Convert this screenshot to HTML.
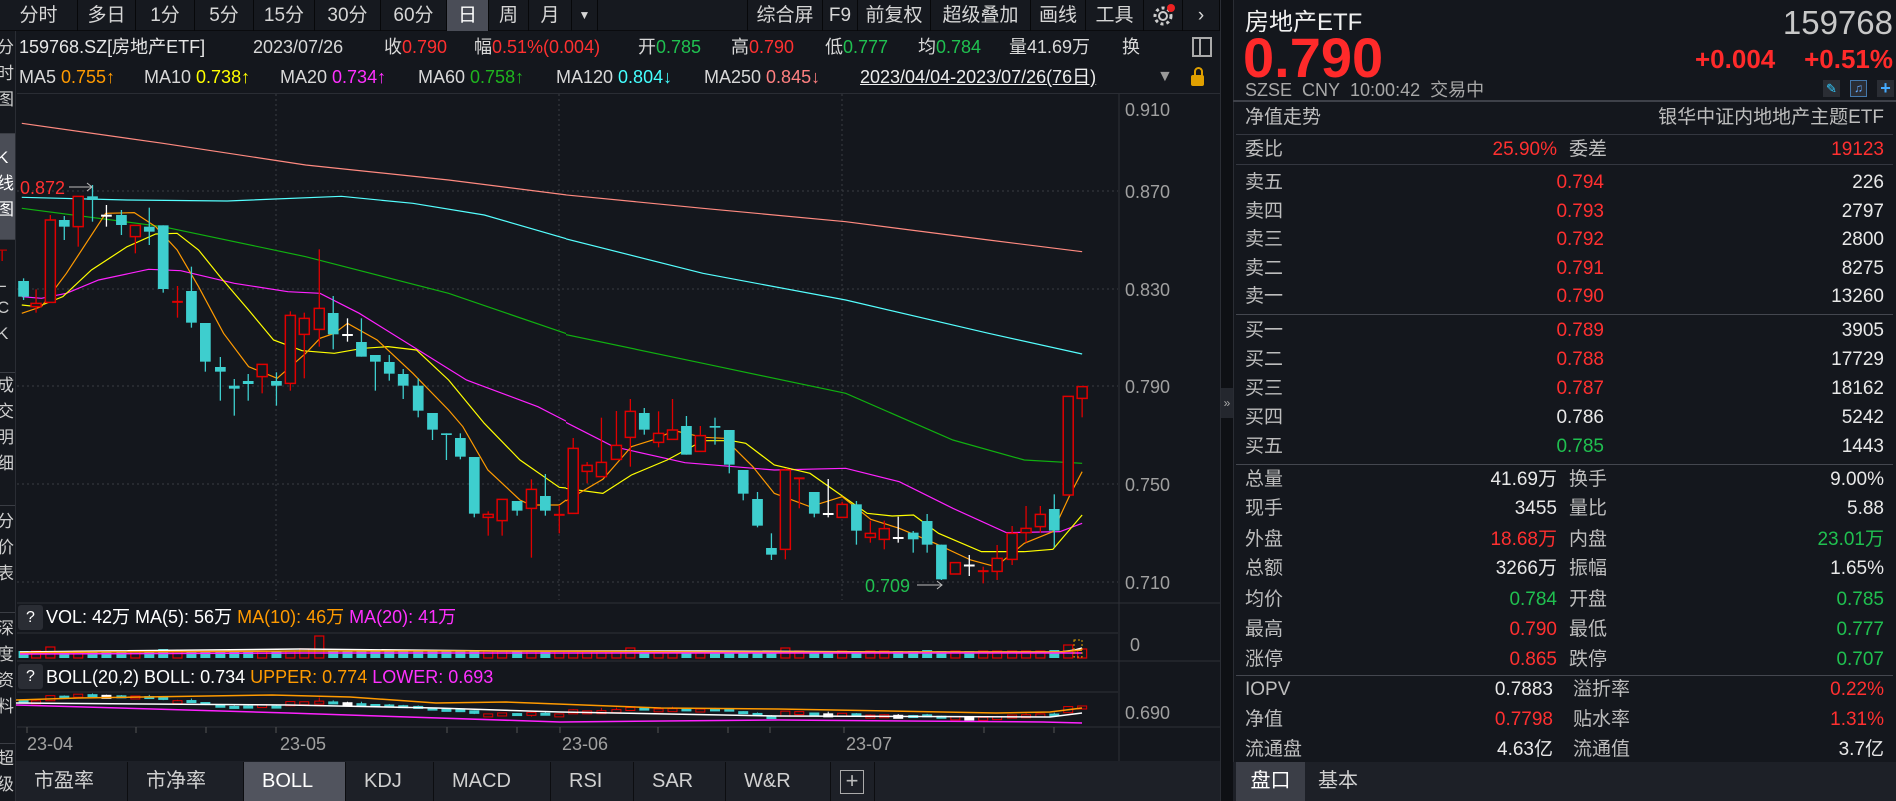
<!DOCTYPE html>
<html><head><meta charset="utf-8">
<style>
*{margin:0;padding:0;box-sizing:border-box}
body{width:1896px;height:801px;background:#14171d;overflow:hidden;position:relative;font-family:"Liberation Sans","Noto Sans CJK SC",sans-serif;color:#d8d8d8}
.a{position:absolute;white-space:nowrap;line-height:24px}
.tb{position:absolute;top:0;height:31px;line-height:31px;font-size:19px;color:#d6d6d6;text-align:center;border-right:1px solid #07080a}
.r{color:#ff3030}.g{color:#20c050}.w{color:#e8e8e8}.lb{color:#bdbdbd}
.o{color:#ff9a00}.m{color:#ff30ff}.y{color:#ffff00}.c{color:#4ff}.gg{color:#1fb51f}.p{color:#ff8080}
.hl{position:absolute;height:1px;background:#343740}
.tab{position:absolute;top:762px;height:39px;line-height:39px;font-size:20px;color:#d0d0d0;padding-left:18px;border-right:1px solid #0c0d10;background:#1d2027}
.rp{font-size:19px}
</style></head><body>
<div style="position:absolute;left:0;top:31px;width:16px;height:770px;background:#15181e;border-right:1px solid #2a2d34;overflow:hidden;font-size:17px;color:#cfcfcf;line-height:26px">
 <div style="position:absolute;top:4px;left:-3px;width:20px">分<br>时<br>图</div>
 <div style="position:absolute;top:103px;left:0;width:16px;height:106px;background:#4a4d56"></div>
 <div style="position:absolute;top:114px;left:-3px;width:20px;color:#fff">K<br>线<br>图</div>
 <div style="position:absolute;top:212px;left:-3px;width:20px;color:#b00">T<br><span style="color:#ccc">L<br>C<br>K</span></div>
 <div style="position:absolute;top:342px;left:-3px;width:20px">成<br>交<br>明<br>细</div>
 <div style="position:absolute;top:478px;left:-3px;width:20px">分<br>价<br>表</div>
 <div style="position:absolute;top:585px;left:-3px;width:20px">深<br>度<br>资<br>料</div>
 <div style="position:absolute;top:715px;left:-3px;width:20px">超<br>级</div>
 <div class="hl" style="top:102px;left:0;width:16px;background:#3a3d44"></div>
 <div class="hl" style="top:208px;left:0;width:16px;background:#3a3d44"></div>
 <div class="hl" style="top:341px;left:0;width:16px;background:#3a3d44"></div>
 <div class="hl" style="top:474px;left:0;width:16px;background:#3a3d44"></div>
 <div class="hl" style="top:581px;left:0;width:16px;background:#3a3d44"></div>
 <div class="hl" style="top:712px;left:0;width:16px;background:#3a3d44"></div>
</div>
<div style="position:absolute;left:0;top:0;width:1220px;height:31px;background:#16191f;border-bottom:1px solid #0a0b0e"></div>
<div class="tb" style="left:0;width:78px">分时</div>
<div class="tb" style="left:78px;width:58px">多日</div>
<div class="tb" style="left:136px;width:59px">1分</div>
<div class="tb" style="left:195px;width:59px">5分</div>
<div class="tb" style="left:254px;width:61px">15分</div>
<div class="tb" style="left:315px;width:66px">30分</div>
<div class="tb" style="left:381px;width:66px">60分</div>
<div class="tb" style="left:447px;width:42px;background:#4a4d57;color:#fff">日</div>
<div class="tb" style="left:489px;width:40px">周</div>
<div class="tb" style="left:529px;width:43px">月</div>
<div class="tb" style="left:572px;width:26px;font-size:12px">▼</div>
<div class="tb" style="left:747px;width:76px;border-left:1px solid #07080a">综合屏</div>
<div class="tb" style="left:823px;width:35px">F9</div>
<div class="tb" style="left:858px;width:73px">前复权</div>
<div class="tb" style="left:931px;width:100px">超级叠加</div>
<div class="tb" style="left:1031px;width:55px">画线</div>
<div class="tb" style="left:1086px;width:58px">工具</div>
<div class="tb" style="left:1144px;width:39px"><svg width="24" height="24" viewBox="0 0 24 24" style="margin-top:4px"><circle cx="12" cy="12" r="4" fill="none" stroke="#ccc" stroke-width="2"/><circle cx="12" cy="12" r="8" fill="none" stroke="#ccc" stroke-width="3" stroke-dasharray="3 3"/><circle cx="20" cy="4" r="4" fill="#e22"/></svg></div>
<div class="tb" style="left:1183px;width:37px">›</div>
<div class="a" style="left:19px;top:35px;font-size:18px;color:#e6e6e6">159768.SZ[房地产ETF]</div>
<div class="a" style="left:253px;top:35px;font-size:18px">2023/07/26</div>
<div class="a" style="left:384px;top:35px;font-size:18px">收<span class="r">0.790</span></div>
<div class="a" style="left:474px;top:35px;font-size:18px">幅<span class="r">0.51%(0.004)</span></div>
<div class="a" style="left:638px;top:35px;font-size:18px">开<span class="g">0.785</span></div>
<div class="a" style="left:731px;top:35px;font-size:18px">高<span class="r">0.790</span></div>
<div class="a" style="left:825px;top:35px;font-size:18px">低<span class="g">0.777</span></div>
<div class="a" style="left:918px;top:35px;font-size:18px">均<span class="g">0.784</span></div>
<div class="a" style="left:1009px;top:35px;font-size:18px">量41.69万</div>
<div class="a" style="left:1122px;top:35px;font-size:18px">换</div>
<div style="position:absolute;left:1192px;top:37px;width:20px;height:20px;border:2px solid #aaa"></div>
<div style="position:absolute;left:1199px;top:37px;width:2px;height:20px;background:#aaa"></div>
<div class="a" style="left:19px;top:65px;font-size:18px">MA5 <span class="o">0.755↑</span></div>
<div class="a" style="left:144px;top:65px;font-size:18px">MA10 <span class="y">0.738↑</span></div>
<div class="a" style="left:280px;top:65px;font-size:18px">MA20 <span class="m">0.734↑</span></div>
<div class="a" style="left:418px;top:65px;font-size:18px">MA60 <span class="gg">0.758↑</span></div>
<div class="a" style="left:556px;top:65px;font-size:18px">MA120 <span class="c">0.804↓</span></div>
<div class="a" style="left:704px;top:65px;font-size:18px">MA250 <span class="p">0.845↓</span></div>
<div class="a" style="left:860px;top:65px;font-size:18px;text-decoration:underline;color:#eee">2023/04/04-2023/07/26(76日)</div>
<div class="a" style="left:1157px;top:65px;font-size:16px;color:#999">▼</div>
<div style="position:absolute;left:1191px;top:75px;width:13px;height:11px;background:#e0a000;border-radius:2px"></div>
<div style="position:absolute;left:1194px;top:67px;width:9px;height:10px;border:2px solid #e0a000;border-bottom:none;border-radius:5px 5px 0 0"></div>
<div class="hl" style="left:17px;top:93px;width:1203px;background:#2a2d34"></div>

<svg id="ch" width="1220" height="801" style="position:absolute;left:0;top:0" xmlns="http://www.w3.org/2000/svg">
<defs>
<clipPath id="k5"><rect x="17" y="94" width="549" height="500"/></clipPath>
<clipPath id="k6"><rect x="566" y="94" width="552" height="500"/></clipPath>
</defs>
<g stroke="#3a3d44" stroke-dasharray="2 3" stroke-width="1">
<line x1="17" y1="191" x2="1118" y2="191"/><line x1="17" y1="289" x2="1118" y2="289"/>
<line x1="17" y1="386" x2="1118" y2="386"/><line x1="17" y1="484" x2="1118" y2="484"/>
<line x1="17" y1="582" x2="1118" y2="582"/>
<line x1="276" y1="94" x2="276" y2="600"/><line x1="559" y1="94" x2="559" y2="600"/><line x1="842" y1="94" x2="842" y2="600"/>
</g>
<line x1="1119" y1="94" x2="1119" y2="762" stroke="#2e3138"/>
<g clip-path="url(#k5)"><g id="g5" transform="translate(20,100) scale(0.35714,0.33333)"></g></g>
<g clip-path="url(#k6)"><g id="g6" transform="translate(560,100) scale(0.35714,0.33333)"></g></g>
<text x="20" y="194" fill="#ff3030" font-size="18" font-family="Liberation Sans">0.872</text>
<line x1="69" y1="187" x2="92" y2="187" stroke="#bbb"/><path d="M87 183 L92 187 L87 191" stroke="#bbb" fill="none"/>
<text x="865" y="592" fill="#20c050" font-size="18" font-family="Liberation Sans">0.709</text>
<line x1="917" y1="585" x2="942" y2="585" stroke="#bbb"/><path d="M937 581 L942 585 L937 589" stroke="#bbb" fill="none"/>
<g fill="#a0a0a0" font-size="18" font-family="Liberation Sans">
<text x="1125" y="116">0.910</text><text x="1125" y="198">0.870</text><text x="1125" y="296">0.830</text>
<text x="1125" y="393">0.790</text><text x="1125" y="491">0.750</text><text x="1125" y="589">0.710</text>
<text x="1130" y="651">0</text><text x="1125" y="719">0.690</text>
</g>
<g stroke="#2e3138"><line x1="17" y1="603" x2="1220" y2="603"/><line x1="17" y1="633" x2="1118" y2="633"/><line x1="17" y1="661" x2="1220" y2="661"/><line x1="17" y1="692" x2="1118" y2="692"/><line x1="17" y1="727" x2="1220" y2="727"/></g>
<g id="vol"></g><g id="boll"></g>
<g stroke="#555"><line x1="27" y1="727" x2="27" y2="733"/></g>
<g id="ticks" stroke="#555"></g>
<g fill="#a0a0a0" font-size="18" font-family="Liberation Sans">
<text x="27" y="750">23-04</text><text x="280" y="750">23-05</text><text x="562" y="750">23-06</text><text x="846" y="750">23-07</text></g>
</svg>
<div style="position:absolute;left:18px;top:605px;width:25px;height:25px;background:#2a2d34;border-radius:3px;color:#fff;font-size:16px;text-align:center;line-height:25px">?</div>
<div class="a" style="left:46px;top:605px;font-size:18px;color:#fff">VOL: 42万 MA(5): 56万 <span class="o">MA(10): 46万</span> <span class="m">MA(20): 41万</span></div>
<div style="position:absolute;left:18px;top:664px;width:25px;height:25px;background:#2a2d34;border-radius:3px;color:#fff;font-size:16px;text-align:center;line-height:25px">?</div>
<div class="a" style="left:46px;top:665px;font-size:18px;color:#fff">BOLL(20,2) BOLL: 0.734 <span class="o">UPPER: 0.774</span> <span class="m">LOWER: 0.693</span></div>
<div style="position:absolute;left:16px;top:761px;width:1204px;height:40px;background:#1d2027"></div>
<div class="tab" style="left:16px;width:112px">市盈率</div>
<div class="tab" style="left:128px;width:116px">市净率</div>
<div class="tab" style="left:244px;width:102px;background:#51545e;color:#fff">BOLL</div>
<div class="tab" style="left:346px;width:88px">KDJ</div>
<div class="tab" style="left:434px;width:117px">MACD</div>
<div class="tab" style="left:551px;width:83px">RSI</div>
<div class="tab" style="left:634px;width:92px">SAR</div>
<div class="tab" style="left:726px;width:105px">W&amp;R</div>
<div class="tab" style="left:831px;width:44px;padding-left:0"><div style="margin:8px 0 0 9px;width:24px;height:24px;border:1px solid #aaa;text-align:center;line-height:20px;font-size:22px;color:#bbb">+</div></div>
<div style="position:absolute;left:1220px;top:0;width:14px;height:801px;background:#0e1014;border-left:1px solid #2a2d34;border-right:1px solid #2a2d34"></div>
<div style="position:absolute;left:1221px;top:388px;width:12px;height:30px;background:#24272e;color:#aaa;font-size:12px;line-height:30px;text-align:center">»</div>
<div class="a" style="left:1245px;top:9px;font-size:24px;line-height:28px;color:#f0f0f0">房地产ETF</div>
<div class="a" style="right:3px;top:3px;font-size:33px;line-height:40px;color:#c8c8c8">159768</div>
<div class="a" style="left:1243px;top:28px;font-size:56px;line-height:60px;font-weight:bold;color:#ff2a2a">0.790</div>
<div class="a" style="left:1695px;top:44px;font-size:26px;line-height:30px;font-weight:bold;color:#ff2a2a">+0.004</div>
<div class="a" style="right:3px;top:44px;font-size:26px;line-height:30px;font-weight:bold;color:#ff2a2a">+0.51%</div>
<div class="a" style="left:1245px;top:78px;font-size:18px;color:#a8a8a8">SZSE&nbsp; CNY&nbsp; 10:00:42&nbsp; 交易中</div>
<div style="position:absolute;left:1823px;top:80px;width:17px;height:17px;background:#2a2d34;color:#3cf;font-size:13px;text-align:center;line-height:17px">✎</div>
<div style="position:absolute;left:1850px;top:80px;width:17px;height:17px;background:#2a2d34;border:1px solid #47a;color:#6af;font-size:12px;text-align:center;line-height:15px">♫</div>
<div style="position:absolute;left:1877px;top:80px;width:17px;height:17px;background:#2a2d34;color:#4af;font-size:18px;font-weight:bold;text-align:center;line-height:17px">+</div>
<div class="hl" style="left:1233px;top:100px;width:663px;height:2px;background:#3e4149"></div>
<div class="hl" style="left:1236px;top:134px;width:657px"></div>
<div class="hl" style="left:1236px;top:164px;width:657px"></div>
<div class="hl" style="left:1236px;top:314px;width:657px;background:#44474f"></div>
<div class="hl" style="left:1236px;top:464px;width:657px;background:#44474f"></div>
<div class="hl" style="left:1236px;top:675px;width:657px;background:#44474f"></div>
<div class="rp">
<div class="a lb" style="left:1245px;top:106px">净值走势</div>
<div class="a lb" style="right:12px;top:106px">银华中证内地地产主题ETF</div>
<div class="a lb" style="left:1245px;top:138px">委比</div><div class="a r" style="right:339px;top:138px">25.90%</div>
<div class="a lb" style="left:1569px;top:138px">委差</div><div class="a r" style="right:12px;top:138px">19123</div>
<div class="a lb" style="left:1245px;top:171px">卖五</div><div class="a r" style="right:292px;top:171px">0.794</div><div class="a w" style="right:12px;top:171px">226</div>
<div class="a lb" style="left:1245px;top:200px">卖四</div><div class="a r" style="right:292px;top:200px">0.793</div><div class="a w" style="right:12px;top:200px">2797</div>
<div class="a lb" style="left:1245px;top:228px">卖三</div><div class="a r" style="right:292px;top:228px">0.792</div><div class="a w" style="right:12px;top:228px">2800</div>
<div class="a lb" style="left:1245px;top:257px">卖二</div><div class="a r" style="right:292px;top:257px">0.791</div><div class="a w" style="right:12px;top:257px">8275</div>
<div class="a lb" style="left:1245px;top:285px">卖一</div><div class="a r" style="right:292px;top:285px">0.790</div><div class="a w" style="right:12px;top:285px">13260</div>
<div class="a lb" style="left:1245px;top:319px">买一</div><div class="a r" style="right:292px;top:319px">0.789</div><div class="a w" style="right:12px;top:319px">3905</div>
<div class="a lb" style="left:1245px;top:348px">买二</div><div class="a r" style="right:292px;top:348px">0.788</div><div class="a w" style="right:12px;top:348px">17729</div>
<div class="a lb" style="left:1245px;top:377px">买三</div><div class="a r" style="right:292px;top:377px">0.787</div><div class="a w" style="right:12px;top:377px">18162</div>
<div class="a lb" style="left:1245px;top:406px">买四</div><div class="a w" style="right:292px;top:406px">0.786</div><div class="a w" style="right:12px;top:406px">5242</div>
<div class="a lb" style="left:1245px;top:435px">买五</div><div class="a g" style="right:292px;top:435px">0.785</div><div class="a w" style="right:12px;top:435px">1443</div>
<div class="a lb" style="left:1245px;top:468px">总量</div><div class="a w" style="right:339px;top:468px">41.69万</div><div class="a lb" style="left:1569px;top:468px">换手</div><div class="a w" style="right:12px;top:468px">9.00%</div>
<div class="a lb" style="left:1245px;top:497px">现手</div><div class="a w" style="right:339px;top:497px">3455</div><div class="a lb" style="left:1569px;top:497px">量比</div><div class="a w" style="right:12px;top:497px">5.88</div>
<div class="a lb" style="left:1245px;top:528px">外盘</div><div class="a r" style="right:339px;top:528px">18.68万</div><div class="a lb" style="left:1569px;top:528px">内盘</div><div class="a g" style="right:12px;top:528px">23.01万</div>
<div class="a lb" style="left:1245px;top:557px">总额</div><div class="a w" style="right:339px;top:557px">3266万</div><div class="a lb" style="left:1569px;top:557px">振幅</div><div class="a w" style="right:12px;top:557px">1.65%</div>
<div class="a lb" style="left:1245px;top:588px">均价</div><div class="a g" style="right:339px;top:588px">0.784</div><div class="a lb" style="left:1569px;top:588px">开盘</div><div class="a g" style="right:12px;top:588px">0.785</div>
<div class="a lb" style="left:1245px;top:618px">最高</div><div class="a r" style="right:339px;top:618px">0.790</div><div class="a lb" style="left:1569px;top:618px">最低</div><div class="a g" style="right:12px;top:618px">0.777</div>
<div class="a lb" style="left:1245px;top:648px">涨停</div><div class="a r" style="right:339px;top:648px">0.865</div><div class="a lb" style="left:1569px;top:648px">跌停</div><div class="a g" style="right:12px;top:648px">0.707</div>
<div class="a lb" style="left:1245px;top:678px">IOPV</div><div class="a w" style="right:343px;top:678px">0.7883</div><div class="a lb" style="left:1573px;top:678px">溢折率</div><div class="a r" style="right:12px;top:678px">0.22%</div>
<div class="a lb" style="left:1245px;top:708px">净值</div><div class="a r" style="right:343px;top:708px">0.7798</div><div class="a lb" style="left:1573px;top:708px">贴水率</div><div class="a r" style="right:12px;top:708px">1.31%</div>
<div class="a lb" style="left:1245px;top:738px">流通盘</div><div class="a w" style="right:343px;top:738px">4.63亿</div><div class="a lb" style="left:1573px;top:738px">流通值</div><div class="a w" style="right:12px;top:738px">3.7亿</div>
</div>
<div style="position:absolute;left:1233px;top:762px;width:663px;height:39px;background:#1d2027"></div>
<div class="a" style="left:1236px;top:762px;width:69px;height:39px;line-height:39px;background:#3b3e47;color:#fff;font-size:20px;text-align:center">盘口</div>
<div class="a" style="left:1318px;top:762px;line-height:39px;color:#d0d0d0;font-size:20px">基本</div>
<script>
var NS="http://www.w3.org/2000/svg";
function el(p,t,a){var e=document.createElementNS(NS,t);for(var k in a)e.setAttribute(k,a[k]);p.appendChild(e);return e;}
var c5=[[10,543,590,535,600,'c'],[45,610,620,568,638,'r'],[85,360,607,345,607,'r'],[124,360,380,348,420,'c'],[163,289,380,289,440,'r'],[203,289,300,255,365,'c'],[242,345,349,315,380,'w'],[284,345,375,330,405,'c'],[323,376,410,376,460,'r'],[362,380,395,323,435,'c'],[401,376,567,376,578,'c'],[441,603,608,558,653,'rd'],[480,573,668,500,683,'c'],[519,669,785,669,815,'c'],[561,801,815,771,902,'c'],[600,857,866,837,947,'c'],[639,843,852,822,902,'c'],[678,793,830,793,880,'r'],[718,843,857,817,917,'c'],[757,646,850,634,872,'r'],[796,655,703,638,835,'r'],[838,625,688,448,740,'r'],[877,639,703,588,748,'c'],[917,703,707,655,725,'w'],[956,726,770,655,770,'c'],[995,765,785,765,872,'c'],[1034,786,821,765,842,'c'],[1073,822,857,807,897,'c'],[1115,857,932,835,952,'c'],[1155,939,989,939,1020,'c'],[1194,1000,1004,1000,1080,'c'],[1233,1014,1070,1000,1078,'c'],[1272,1071,1241,1071,1252,'c'],[1311,1243,1252,1234,1307,'r'],[1350,1198,1262,1198,1307,'r'],[1392,1203,1232,1203,1247,'c'],[1432,1168,1225,1138,1373,'r'],[1471,1188,1232,1122,1247,'c'],[1510,1242,1247,1215,1300,'rd']];
var c6=[[37,1045,1240,1014,1240,'r'],[76,1096,1114,1086,1150,'r'],[116,1087,1130,953,1130,'r'],[158,1036,1078,933,1078,'r'],[197,934,1012,897,1100,'r'],[236,939,989,924,1004,'c'],[276,1000,1027,934,1042,'r'],[315,990,1018,897,1018,'r'],[354,978,1064,948,1064,'c'],[393,1007,1054,978,1054,'r'],[434,978,983,953,1034,'c'],[474,990,1094,990,1120,'c'],[513,1110,1181,1110,1201,'c'],[553,1197,1277,1176,1282,'c'],[592,1344,1364,1300,1380,'c'],[631,1110,1348,1104,1378,'r'],[670,1133,1137,1133,1225,'rd'],[712,1176,1241,1176,1252,'c'],[751,1240,1244,1137,1252,'w'],[790,1213,1252,1205,1252,'r'],[830,1213,1292,1203,1334,'c'],[869,1300,1312,1262,1328,'r'],[908,1286,1318,1262,1348,'r'],[947,1312,1316,1250,1328,'w'],[989,1298,1318,1293,1358,'c'],[1028,1263,1334,1242,1358,'c'],[1068,1334,1438,1334,1440,'c'],[1107,1388,1422,1388,1422,'r'],[1146,1395,1398,1365,1428,'w'],[1185,1412,1415,1400,1450,'rd'],[1224,1375,1414,1335,1440,'r'],[1266,1300,1378,1278,1395,'r'],[1305,1285,1298,1218,1328,'r'],[1345,1243,1280,1218,1298,'r'],[1384,1227,1292,1183,1342,'c'],[1423,889,1185,889,1185,'r'],[1462,860,895,860,952,'r']];
var L5={p:[[5,70],[400,130],[800,195],[1200,240],[1568,290]],c:[[5,292],[300,300],[580,303],[900,289],[1100,310],[1300,345],[1568,428]],
g:[[5,325],[400,380],[800,470],[1200,580],[1568,715]],
m:[[5,590],[60,595],[130,580],[220,540],[360,508],[450,512],[600,550],[750,575],[840,580],[950,640],[1100,740],[1250,840],[1450,920],[1568,985]],
y:[[5,615],[50,620],[120,590],[200,510],[300,440],[380,402],[440,400],[500,450],[560,530],[640,630],[710,720],[790,752],[880,760],[960,745],[1030,740],[1110,750],[1200,840],[1300,970],[1400,1080],[1510,1162],[1568,1168]],
o:[[5,640],[60,620],[130,520],[240,340],[320,338],[380,380],[440,450],[500,560],[570,700],[640,800],[720,835],[800,760],[840,715],[880,700],[917,670],[1000,720],[1100,820],[1200,930],[1240,980],[1310,1110],[1400,1200],[1430,1215],[1510,1215],[1568,1170]]};
var L6={p:[[0,283],[400,325],[800,365],[1200,420],[1462,455]],c:[[0,412],[400,520],[800,600],[1200,700],[1462,762]],
g:[[0,700],[400,790],[800,880],[1100,1020],[1300,1080],[1462,1090]],
m:[[0,958],[150,1040],[350,1088],[600,1110],[800,1105],[950,1145],[1100,1225],[1250,1298],[1400,1295],[1462,1270]],
y:[[0,1163],[120,1180],[200,1125],[300,1080],[400,1022],[480,1022],[520,1030],[600,1095],[700,1120],[780,1180],[860,1240],[930,1248],[990,1245],[1060,1300],[1180,1355],[1300,1355],[1380,1348],[1462,1245]],
o:[[0,1213],[120,1138],[200,1040],[260,1020],[320,992],[400,1012],[460,1015],[540,1100],[600,1180],[700,1220],[790,1190],[870,1258],[950,1285],[1050,1330],[1150,1380],[1220,1400],[1300,1330],[1380,1295],[1430,1180],[1462,1115]]};
var COL={p:'#ff8a80',c:'#55ffff',g:'#10b010',m:'#ff22ff',y:'#ffff00',o:'#ff9a00'};
var BG='#14171d',CY='#3ecece',RD='#e00000';
function draw(g,cs,L){
 for(var k in L){el(g,'polyline',{points:L[k].map(function(p){return p.join(',')}).join(' '),fill:'none',stroke:COL[k],'stroke-width':1.2,'vector-effect':'non-scaling-stroke'});}
 cs.forEach(function(c){var x=c[0],t=c[1],b=c[2],wt=c[3],wb=c[4],k=c[5];
  var col=k=='c'?CY:(k=='w'?'#fff':RD);
  el(g,'line',{x1:x,y1:wt,x2:x,y2:wb,stroke:col,'stroke-width':1.3,'vector-effect':'non-scaling-stroke'});
  if(k=='w'||k=='rd'){el(g,'line',{x1:x-15,y1:(t+b)/2,x2:x+15,y2:(t+b)/2,stroke:col,'stroke-width':2,'vector-effect':'non-scaling-stroke'});}
  else if(k=='c'){el(g,'rect',{x:x-15,y:t,width:30,height:Math.max(b-t,5),fill:CY});}
  else{el(g,'rect',{x:x-14,y:t,width:28,height:Math.max(b-t,5),fill:BG,stroke:RD,'stroke-width':1.5,'vector-effect':'non-scaling-stroke'});}
 });
}
draw(document.getElementById('g5'),c5,L5);draw(document.getElementById('g6'),c6,L6);
var all=c5.map(function(c){return [20+c[0]/2.8,100+c[1]/3,100+c[2]/3,100+c[3]/3,100+c[4]/3,c[5]]}).concat(c6.map(function(c){return [560+c[0]/2.8,100+c[1]/3,100+c[2]/3,100+c[3]/3,100+c[4]/3,c[5]]}));
var vh={2:11,10:9,20:9,21:22,43:10,54:10,74:13,75:9,64:8,73:8};
var vg=document.getElementById('vol'),bg=document.getElementById('boll');
all.forEach(function(c,i){var x=c[0],h=vh[i]||7,k=c[5];
 if(k=='c'||k=='w')el(vg,'rect',{x:x-5,y:658-h,width:10,height:h,fill:CY});
 else el(vg,'rect',{x:x-4.5,y:658-h,width:9,height:h,fill:BG,stroke:RD,'stroke-width':1.2});
 var f=function(v){return 682+v*0.062};
 var t=f(c[1]),b=Math.max(f(c[2]),t+3);
 var col=k=='c'?CY:(k=='w'?'#fff':RD);
 el(bg,'line',{x1:x,y1:f(c[3]),x2:x,y2:f(c[4]),stroke:col,'stroke-width':1});
 if(k=='c')el(bg,'rect',{x:x-5,y:t,width:10,height:b-t,fill:CY});else el(bg,'rect',{x:x-4.5,y:t,width:9,height:b-t,fill:k=='w'?'#fff':BG,stroke:col,'stroke-width':1});
});
[['#fff',[[20,652],[100,651],[300,649],[500,651],[700,651],[900,652],[1060,652],[1075,650],[1082,648]]],['#ff9a00',[[20,653],[100,652],[300,651],[500,651],[700,652],[900,652],[1060,652],[1082,650]]],['#ff22ff',[[20,654],[300,653],[600,653],[900,653],[1082,653]]]].forEach(function(l){el(vg,'polyline',{points:l[1].map(function(p){return p.join(',')}).join(' '),fill:'none',stroke:l[0],'stroke-width':1.5});});
el(vg,'rect',{x:1074,y:640,width:8,height:17,fill:'none',stroke:'#e0a000','stroke-dasharray':'2 2'});
[['#ff9a00',[[16,700],[78,698],[272,695],[350,697],[436,703],[506,702],[661,708],[778,709],[996,713],[1050,712],[1082,708]]],['#fff',[[16,703],[288,705],[436,708],[560,712],[778,716],[1050,717],[1082,713]]],['#ff22ff',[[16,705],[288,713],[560,722],[778,720],[1043,722],[1082,723]]]].forEach(function(l){el(bg,'polyline',{points:l[1].map(function(p){return p.join(',')}).join(' '),fill:'none',stroke:l[0],'stroke-width':1.5});});
var tk=document.getElementById('ticks');
[136,206,276,447,517,560,658,728,770,844,984,1054].forEach(function(x){el(tk,'line',{x1:x,y1:727,x2:x,y2:733});});
</script>
</body></html>
